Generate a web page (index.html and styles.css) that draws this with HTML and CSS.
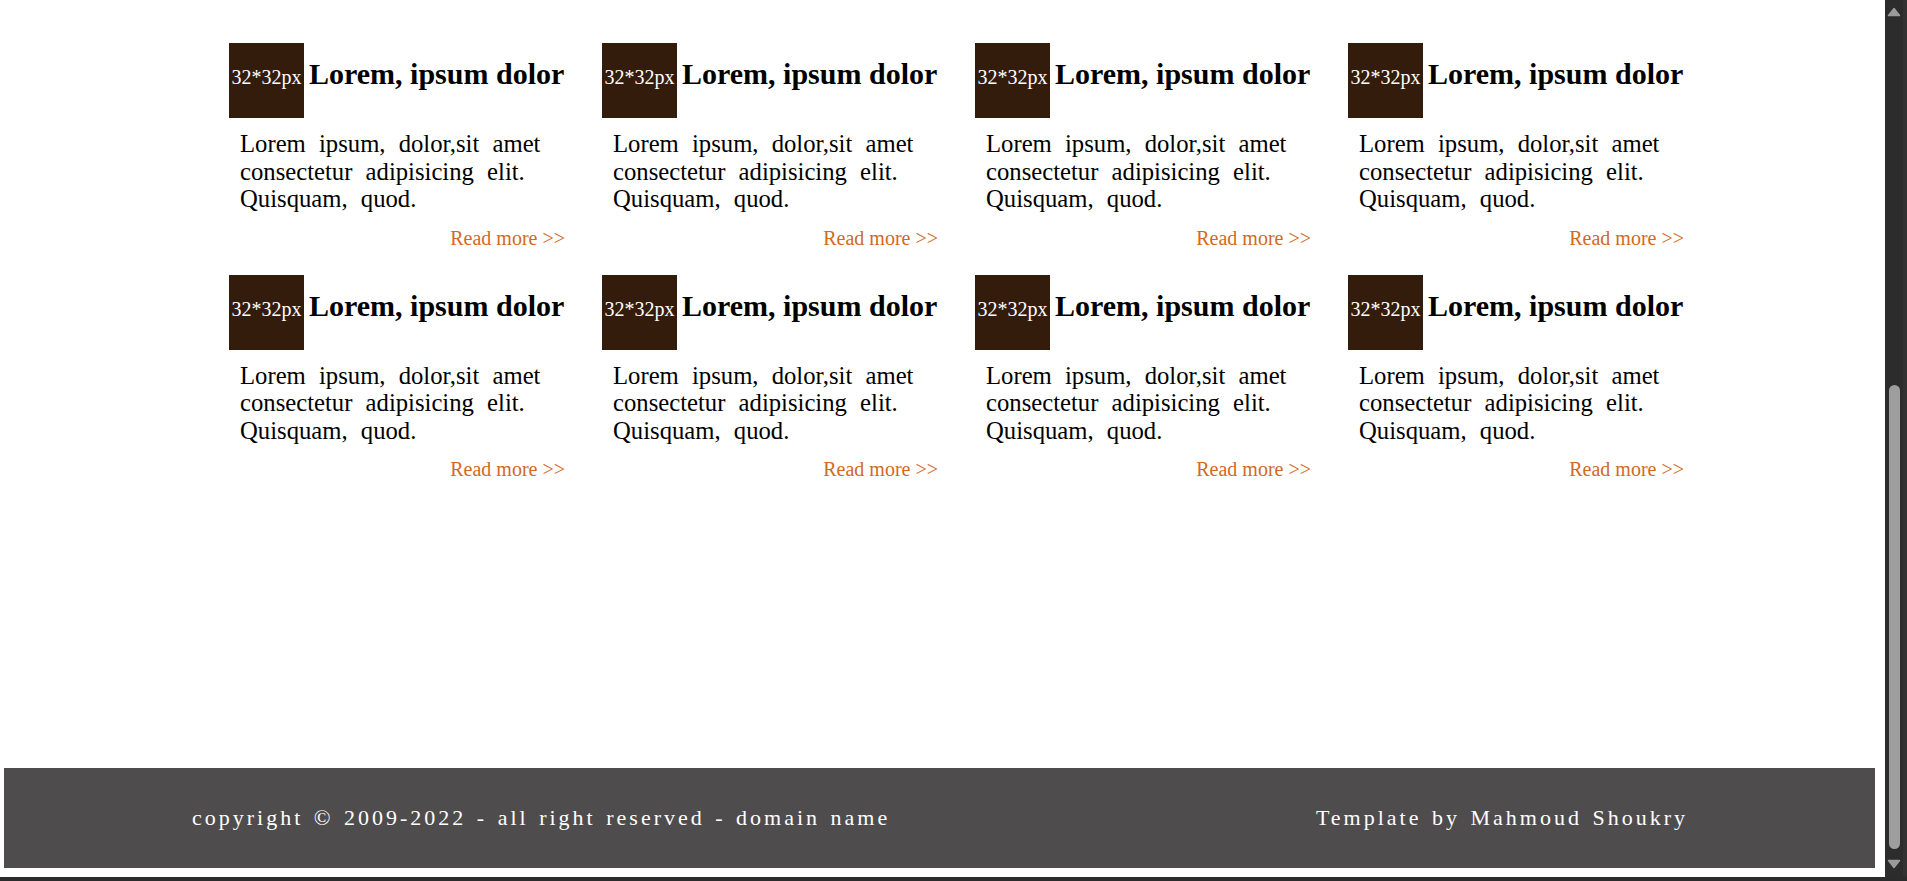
FILE: index.html
```html
<!DOCTYPE html>
<html lang="en">
<head>
<meta charset="utf-8">
<title>Template</title>
<link rel="stylesheet" href="styles.css">
</head>
<body>
<div class="window">
  <div class="page">
    <section class="features">
      <article class="card">
        <div class="card-head"><div class="thumb">32*32px</div><h2 class="card-title">Lorem, ipsum dolor</h2></div>
        <p class="card-text">Lorem ipsum, dolor,sit amet consectetur adipisicing elit. Quisquam, quod.</p>
        <a class="read-more" href="#">Read more &gt;&gt;</a>
      </article>
      <article class="card">
        <div class="card-head"><div class="thumb">32*32px</div><h2 class="card-title">Lorem, ipsum dolor</h2></div>
        <p class="card-text">Lorem ipsum, dolor,sit amet consectetur adipisicing elit. Quisquam, quod.</p>
        <a class="read-more" href="#">Read more &gt;&gt;</a>
      </article>
      <article class="card">
        <div class="card-head"><div class="thumb">32*32px</div><h2 class="card-title">Lorem, ipsum dolor</h2></div>
        <p class="card-text">Lorem ipsum, dolor,sit amet consectetur adipisicing elit. Quisquam, quod.</p>
        <a class="read-more" href="#">Read more &gt;&gt;</a>
      </article>
      <article class="card">
        <div class="card-head"><div class="thumb">32*32px</div><h2 class="card-title">Lorem, ipsum dolor</h2></div>
        <p class="card-text">Lorem ipsum, dolor,sit amet consectetur adipisicing elit. Quisquam, quod.</p>
        <a class="read-more" href="#">Read more &gt;&gt;</a>
      </article>
      <article class="card">
        <div class="card-head"><div class="thumb">32*32px</div><h2 class="card-title">Lorem, ipsum dolor</h2></div>
        <p class="card-text">Lorem ipsum, dolor,sit amet consectetur adipisicing elit. Quisquam, quod.</p>
        <a class="read-more" href="#">Read more &gt;&gt;</a>
      </article>
      <article class="card">
        <div class="card-head"><div class="thumb">32*32px</div><h2 class="card-title">Lorem, ipsum dolor</h2></div>
        <p class="card-text">Lorem ipsum, dolor,sit amet consectetur adipisicing elit. Quisquam, quod.</p>
        <a class="read-more" href="#">Read more &gt;&gt;</a>
      </article>
      <article class="card">
        <div class="card-head"><div class="thumb">32*32px</div><h2 class="card-title">Lorem, ipsum dolor</h2></div>
        <p class="card-text">Lorem ipsum, dolor,sit amet consectetur adipisicing elit. Quisquam, quod.</p>
        <a class="read-more" href="#">Read more &gt;&gt;</a>
      </article>
      <article class="card">
        <div class="card-head"><div class="thumb">32*32px</div><h2 class="card-title">Lorem, ipsum dolor</h2></div>
        <p class="card-text">Lorem ipsum, dolor,sit amet consectetur adipisicing elit. Quisquam, quod.</p>
        <a class="read-more" href="#">Read more &gt;&gt;</a>
      </article>
    </section>
    <div class="spacer"></div>
    <footer class="footer">
      <p class="footer-text">copyright &copy; 2009-2022 - all right reserved - domain name</p>
      <p class="footer-text">Template by Mahmoud Shoukry</p>
    </footer>
  </div>
  <div class="scrollbar">
    <svg class="arrow arrow-up" width="14" height="10" viewBox="0 0 14 10"><path d="M7 1.5 L12.5 8.5 L1.5 8.5 Z" fill="#9b9b9b" stroke="#9b9b9b" stroke-linejoin="round" stroke-width="1.5"/></svg>
    <div class="track"><div class="thumb-bar"></div></div>
    <svg class="arrow arrow-down" width="14" height="10" viewBox="0 0 14 10"><path d="M1.5 1.5 L12.5 1.5 L7 8.5 Z" fill="#9b9b9b" stroke="#9b9b9b" stroke-linejoin="round" stroke-width="1.5"/></svg>
  </div>
</div>
</body>
</html>
```
FILE: styles.css
```css
* { box-sizing: border-box; }

html, body {
  margin: 0;
  padding: 0;
  height: 100%;
}

body {
  background: #2b2b2b;
  font-family: "Liberation Serif", "Times New Roman", serif;
  overflow: hidden;
}

.window {
  display: flex;
  height: 877px;
}

.page {
  flex: 1;
  display: flex;
  flex-direction: column;
  background: #ffffff;
}

.features {
  display: grid;
  grid-template-columns: repeat(4, 336px);
  column-gap: 37px;
  row-gap: 25px;
  padding: 43px 0 0 229px;
}

.card {
  display: flex;
  flex-direction: column;
}

.card-head {
  display: flex;
  align-items: flex-start;
}

.thumb {
  width: 75px;
  height: 75px;
  flex: none;
  background: #341c0c;
  color: #ffffff;
  font-family: "Liberation Serif", "Times New Roman", serif;
  font-size: 20px;
  display: flex;
  align-items: center;
  justify-content: center;
  padding-bottom: 6px;
  white-space: nowrap;
}

.card-title {
  margin: 14px 0 0 5px;
  font-family: "Liberation Serif", "Times New Roman", serif;
  font-size: 30px;
  line-height: 34px;
  font-weight: bold;
  white-space: nowrap;
  color: #000;
}

.card-text {
  margin: 12px 0 0;
  padding: 0 12px 0 11px;
  font-family: "Liberation Serif", "Times New Roman", serif;
  font-size: 24.7px;
  line-height: 27.5px;
  word-spacing: 7px;
  color: #000;
}

.read-more {
  align-self: flex-end;
  margin-top: 14px;
  font-family: "Liberation Serif", "Times New Roman", serif;
  font-size: 20px;
  line-height: 23px;
  color: #d2691e;
  text-decoration: none;
}

.spacer {
  flex: 1;
}

.footer {
  margin: 0 10px 9px 4px;
  height: 100px;
  background: #4e4c4d;
  display: flex;
  align-items: center;
  justify-content: space-between;
  padding: 0 187px 0 188px;
}

.footer-text {
  margin: 0;
  color: #ffffff;
  font-family: "Liberation Serif", "Times New Roman", serif;
  font-size: 22px;
  letter-spacing: 3px;
  word-spacing: 2px;
}

.scrollbar {
  width: 22px;
  flex: none;
  background: #2c2c2c;
  border-right: 4px solid #323232;
  display: flex;
  flex-direction: column;
  align-items: center;
  padding: 7px 0 8px;
  border-bottom-right-radius: 4px;
}

.arrow {
  display: block;
  flex: none;
}

.track {
  flex: 1;
  width: 100%;
  display: flex;
  flex-direction: column;
  justify-content: flex-end;
  padding: 0 0 10px 4px;
}

.thumb-bar {
  width: 11px;
  height: 464px;
  background: #9e9e9e;
  border-radius: 6px;
}
```
